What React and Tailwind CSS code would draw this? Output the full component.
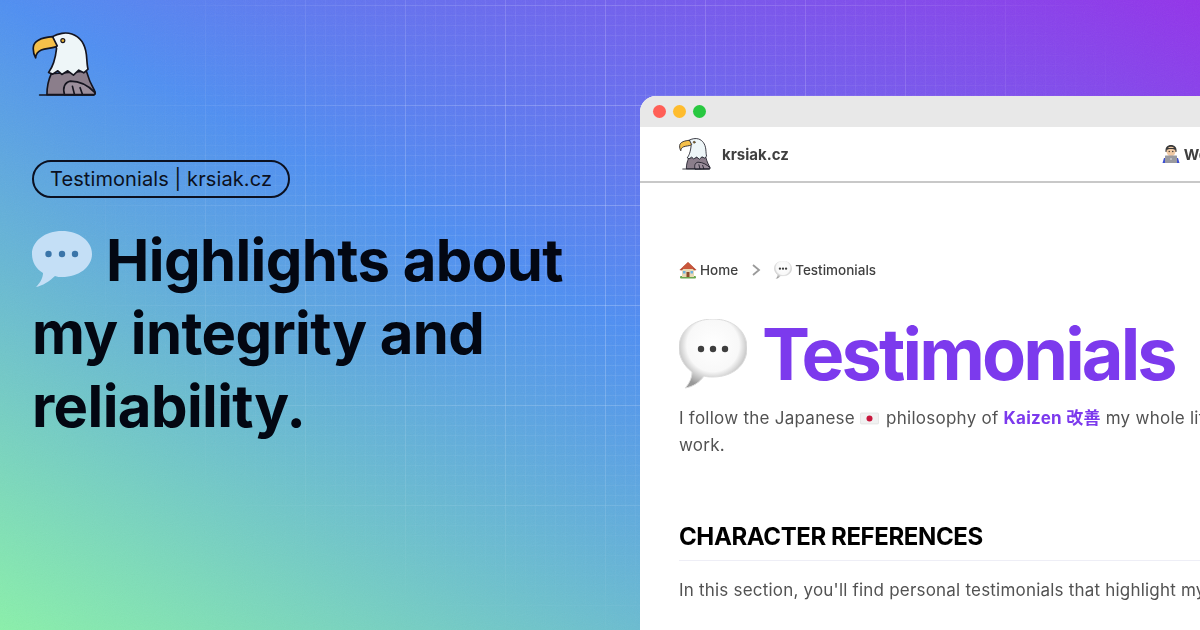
/* ---------- drawings ---------- */
function Eagle({ className }) {
  return (
    <svg viewBox="22 22 196 196" className={className} fill="none" stroke="#14141f" strokeWidth="5" strokeLinejoin="round" strokeLinecap="round">
      <path d="M80 148 C72 165 67 185 67 211 L208 211 C213 211 214 204 211 200 C203 186 194 170 186 140 Z" fill="#8b7e8b" />
      <path d="M120 211 C114 190 120 174 138 170 C170 170 196 188 211 204 C213 208 211 211 208 211 Z" fill="#9c8f9c" />
      <path d="M144 186 L150 210 M167 190 L174 210" />
      <path d="M45 212 L208 212" />
      <path d="M84 36 C100 26 124 22 142 28 C166 36 182 58 186 90 C188 110 188 124 191 134 L178 145 L163 137 L147 152 L130 139 L112 150 L100 139 L84 149 L72 144 C84 128 92 108 96 72 Z" fill="#eef6f8" />
      <path d="M84 36 C60 38 28 46 26 68 C25 80 28 92 33 100 C34 88 40 80 50 76 C66 70 84 72 98 64 Z" fill="#f5c04a" />
      <circle cx="115" cy="48" r="6" fill="#e9b234" strokeWidth="3.5" />
    </svg>
  )
}

function FlatBubble() {
  return (
    <svg viewBox="0 0 60 57" className="inline-block w-[60px] h-[57px] align-[-7px] mr-[14px]">
      <path d="M30 0 C47 0 60 10 60 23 C60 36 47 46 30 46 C28 46 25 46 23 45 C18 50 10 55 4 56 C8 52 11 47 11 42 C4 38 0 31 0 23 C0 10 13 0 30 0 Z" fill="#c4dff6" />
      <circle cx="16.5" cy="23" r="3.2" fill="#3a75a9" />
      <circle cx="30" cy="23" r="3.2" fill="#3a75a9" />
      <circle cx="43" cy="23" r="3.2" fill="#3a75a9" />
    </svg>
  )
}

function ShinyBubble({ className, id, dot = 3.2 }) {
  return (
    <svg viewBox="0 0 68 70" className={className}>
      <defs>
        <radialGradient id={id} cx="50%" cy="38%" r="62%">
          <stop offset="0%" stopColor="#ffffff" />
          <stop offset="62%" stopColor="#f8f8f8" />
          <stop offset="100%" stopColor="#989898" />
        </radialGradient>
      </defs>
      <path d="M34 0 C54 0 68 12 68 29 C68 46 54 58 34 58 C31 58 28 58 25 57 C21 63 14 68 6 69 C10 65 13 59 13 53 C5 47 0 38 0 29 C0 12 14 0 34 0 Z" fill={`url(#${id})`} stroke="#dcdcdc" strokeWidth="1" />
      <circle cx="22" cy="30" r={dot} fill="#3f3f3f" />
      <circle cx="34" cy="30" r={dot} fill="#3f3f3f" />
      <circle cx="46" cy="30" r={dot} fill="#3f3f3f" />
    </svg>
  )
}

function House() {
  return (
    <svg viewBox="0 0 18 18" className="w-[18px] h-[18px]">
      <rect x="1" y="15" width="16" height="2.500" rx="1" fill="#6aa84f" />
      <path d="M3 8 H15 V16 H3 Z" fill="#e8d9b5" />
      <path d="M0.500 9 L9 1 L17.500 9 L15.500 9.500 L9 4 L2.500 9.500 Z" fill="#b5462f" />
      <path d="M4 6 L9 1.500 L14 6 L14 8 L4 8 Z" fill="#c9573c" />
      <rect x="7.500" y="11" width="3" height="5" fill="#8a4b2a" />
      <rect x="4" y="10" width="2.500" height="2.500" fill="#6cb2e0" />
      <rect x="11.500" y="10" width="2.500" height="2.500" fill="#6cb2e0" />
    </svg>
  )
}

function Technologist() {
  return (
    <svg viewBox="0 0 18 20" className="w-[18px] h-[20px]">
      <path d="M3.500 8 C3 3 5.500 1 9 1 C12.500 1 15 3 14.500 8 Z" fill="#3a3a3a" />
      <ellipse cx="9" cy="7.500" rx="4.500" ry="4.800" fill="#f0c9a4" />
      <path d="M4.500 6 C6 4.500 12 4.500 13.500 6 L13.500 4 L4.500 4 Z" fill="#3a3a3a" />
      <circle cx="7.200" cy="7.500" r="0.700" fill="#333" />
      <circle cx="10.800" cy="7.500" r="0.700" fill="#333" />
      <path d="M0.500 19 L2 14 L16 14 L17.500 19 Z" fill="#3d4fd1" />
      <rect x="3" y="11.500" width="12" height="7.500" rx="0.500" fill="#9a9a9f" />
      <circle cx="9" cy="15" r="0.800" fill="#e8e8e8" />
    </svg>
  )
}

function JapanFlag() {
  return (
    <svg viewBox="0 0 19 13" className="inline-block w-[19px] h-[13px] align-[-1px] mr-[2px]">
      <rect x="0.500" y="1" width="18" height="11" rx="1" fill="#f1f1f1" stroke="#dcdcdc" strokeWidth="0.600" />
      <circle cx="9.500" cy="6.500" r="3" fill="#c8153c" />
    </svg>
  )
}

export default function App() {
  return (
    <div className="relative flex w-[1200px] h-[630px] overflow-hidden bg-[linear-gradient(to_top_right,#8af0aa,#4f8ff2_50%,#9333ea)] font-['Inter',sans-serif]">
      {/* grid overlay */}
      <div className="absolute inset-0 pointer-events-none bg-[linear-gradient(to_right,rgba(255,255,255,0.15)_1px,transparent_1px),linear-gradient(to_bottom,rgba(255,255,255,0.15)_1px,transparent_1px),linear-gradient(to_right,rgba(255,255,255,0.09)_1px,transparent_1px),linear-gradient(to_bottom,rgba(255,255,255,0.09)_1px,transparent_1px)] [background-size:100px_100px,100px_100px,10px_10px,10px_10px] [background-position:5px_5px] [mask-image:radial-gradient(ellipse_570px_430px_at_620px_220px,black_30%,transparent_100%)]" />

      {/* grain */}
      <svg className="absolute inset-0 w-full h-full pointer-events-none opacity-[0.07]">
        <filter id="grain">
          <feTurbulence type="fractalNoise" baseFrequency="0.9" numOctaves="2" />
          <feColorMatrix type="saturate" values="0" />
        </filter>
        <rect width="100%" height="100%" filter="url(#grain)" />
      </svg>

      {/* left side */}
      <div className="relative w-[640px] shrink-0 flex flex-col items-start pt-8 pl-8 text-[#030712]">
        <Eagle className="w-[65px] h-[65px]" />
        <div className="mt-[63px] h-[38px] w-[258px] flex items-center justify-center rounded-full border-2 border-[#0b1020] text-[20px] tracking-[0.005em] text-[#0b1020] whitespace-nowrap">
          Testimonials | krsiak.cz
        </div>
        <h1 className="mt-[26px] w-[560px] text-[58px] leading-[73px] font-bold tracking-[-0.01em]">
          <FlatBubble />Highlights about my integrity and reliability.
        </h1>
      </div>

      {/* browser window */}
      <div className="relative flex-1 pt-[96px] min-w-0">
        <div className="w-[800px] h-[534px] bg-white rounded-tl-[16px] overflow-hidden">
          <div className="h-[31px] bg-[#e8e8e8] flex items-center gap-[7px] pl-[13px]">
            <span className="w-[13px] h-[13px] rounded-full bg-[#ff5f57]" />
            <span className="w-[13px] h-[13px] rounded-full bg-[#febc2e]" />
            <span className="w-[13px] h-[13px] rounded-full bg-[#28c840]" />
          </div>
          <div className="h-[56px] flex items-center border-b-2 border-[#c8c8c8] pl-[39px] text-[15px] font-bold text-[#404040] blur-[0.3px]">
            <Eagle className="w-[32px] h-[32px]" />
            <span className="ml-[11px] mt-[2px] mr-[373px]">krsiak.cz</span>
            <Technologist />
            <span className="ml-[4px] mt-[2px]">Work</span>
          </div>
          <div className="pl-[39px] pt-[77px] text-[#525252] whitespace-nowrap blur-[0.3px]">
            <div className="flex items-center h-[20px] text-[13.500px] font-medium text-[#404040]">
              <House />
              <span className="ml-[3px]">Home</span>
              <span className="ml-[13px] mr-[13px]">
                <svg viewBox="0 0 10 14" className="w-[10px] h-[14px]" fill="none" stroke="#9a9a9a" strokeWidth="1.800">
                  <path d="M2 2 L8 7 L2 12" />
                </svg>
              </span>
              <ShinyBubble id="crumbBubble" dot={4.5} className="w-[18px] h-[18px]" />
              <span className="ml-[3px]">Testimonials</span>
            </div>
            <div className="mt-[30px] flex items-center h-[87px]">
              <ShinyBubble id="titleBubble" className="w-[68px] h-[70px]" />
              <span className="ml-[15px] text-[72px] font-bold tracking-[-0.04em] text-[#7c3aed]">Testimonials</span>
            </div>
            <p className="mt-[6px] text-[17px] tracking-[0.015em] leading-[27px]">
              I follow the Japanese <JapanFlag /> philosophy of <span className="font-bold text-[#7c3aed]">Kaizen <span className="font-['Noto_Sans_CJK_JP','Inter',sans-serif]">改善</span></span> my whole life and at
              <br />
              work.
            </p>
            <h2 className="mt-[62px] w-[761px] pb-[7px] border-b border-[#eeeef6] text-[24px] tracking-[-0.4px] leading-[32px] font-bold text-black">CHARACTER REFERENCES</h2>
            <p className="mt-[16px] text-[17px] tracking-[0.012em] leading-[27px]">In this section, you'll find personal testimonials that highlight my integrity</p>
          </div>
        </div>
      </div>
    </div>
  )
}
